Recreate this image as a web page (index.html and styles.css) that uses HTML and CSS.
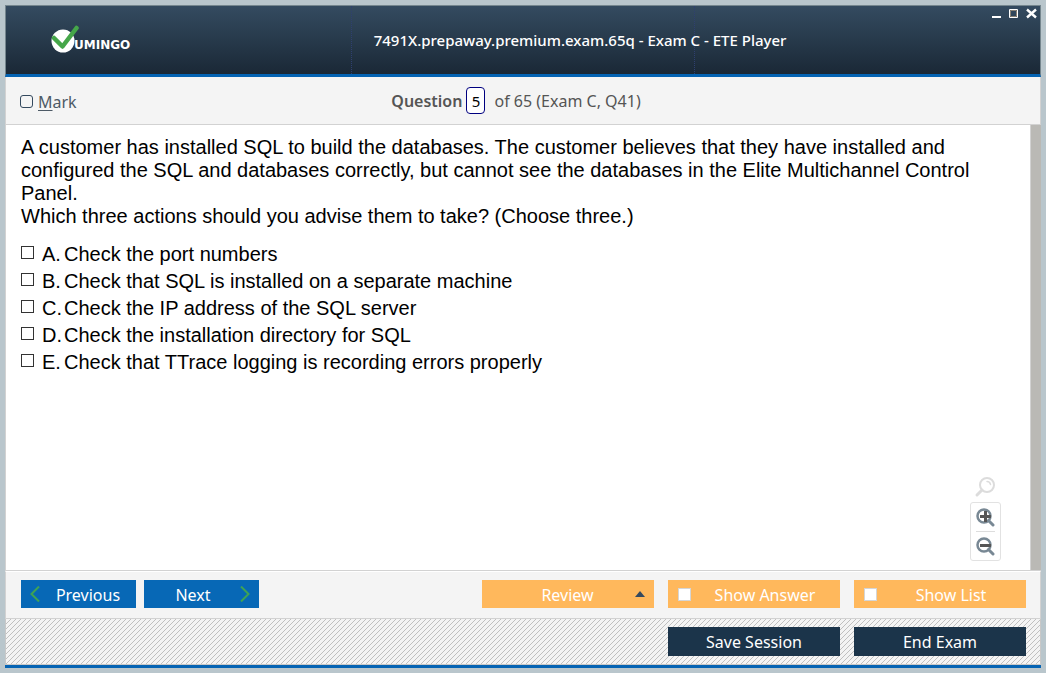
FILE: index.html
```
<!DOCTYPE html>
<html lang="en">
<head>
<meta charset="utf-8">
<title>7491X.prepaway.premium.exam.65q - Exam C - ETE Player</title>
<link rel="stylesheet" href="styles.css">
</head>
<body>
<div class="window">
  <header class="titlebar">
    <div class="brand">
      <svg class="brand-logo" width="84" height="30" viewBox="0 0 84 30" role="img" aria-label="Vumingo">
        <circle cx="13" cy="16" r="11.5" fill="#fff"/>
        <path d="M4 13L12.500 21.500L26.500 3" fill="none" stroke="#45a649" stroke-width="4.500" stroke-linecap="round" stroke-linejoin="round"/>
        <text class="brand-name" x="24" y="24">UMINGO</text>
      </svg>
    </div>
    <h1 class="title">7491X.prepaway.premium.exam.65q - Exam C - ETE Player</h1>
    <div class="window-controls">
      <button class="window-button" type="button" aria-label="Minimize"><svg width="12" height="12" viewBox="0 0 12 12"><path d="M2 8h9v2H2z" fill="#fff"/></svg></button>
      <button class="window-button" type="button" aria-label="Maximize"><svg width="12" height="12" viewBox="0 0 12 12"><path d="M1.500 1.500h8v8h-8z" fill="none" stroke="#fff"/><path d="M2.500 2.500h6v6h-6z" fill="none" stroke="#8a8275"/></svg></button>
      <button class="window-button" type="button" aria-label="Close"><svg width="12" height="12" viewBox="0 0 12 12"><path d="M1 1.500L10 9.500M10 1.500L1 9.500" stroke="#fff" stroke-width="2.400"/></svg></button>
    </div>
  </header>

  <div class="infobar">
    <label class="mark"><input class="mark-box" type="checkbox"><span><u>M</u>ark</span></label>
    <div class="counter">
      <label class="counter-label" for="number">Question</label>
      <input class="counter-input" id="number" type="text" value="5">
      <span>of 65 (Exam C, Q41)</span>
    </div>
  </div>

  <main class="content">
    <div class="question">
      <p class="question-text">A customer has installed SQL to build the databases. The customer believes that they have installed and configured the SQL and databases correctly, but cannot see the databases in the Elite Multichannel Control Panel.<br>Which three actions should you advise them to take? (Choose three.)</p>
      <div class="answers">
        <label class="answer"><input class="answer-box" type="checkbox"><span class="letter">A.</span><span>Check the port numbers</span></label>
        <label class="answer"><input class="answer-box" type="checkbox"><span class="letter">B.</span><span>Check that SQL is installed on a separate machine</span></label>
        <label class="answer"><input class="answer-box" type="checkbox"><span class="letter">C.</span><span>Check the IP address of the SQL server</span></label>
        <label class="answer"><input class="answer-box" type="checkbox"><span class="letter">D.</span><span>Check the installation directory for SQL</span></label>
        <label class="answer"><input class="answer-box" type="checkbox"><span class="letter">E.</span><span>Check that TTrace logging is recording errors properly</span></label>
      </div>
    </div>
    <div class="zoom">
      <svg class="zoom-reset" width="22" height="22" viewBox="0 0 22 22"><g fill="none" stroke="#dcdcdc" stroke-linecap="round"><circle cx="13" cy="9" r="7" stroke-width="2"/><path d="M8 14L3 19" stroke-width="3"/><path d="M13 5.500q3 0 3.500 3" stroke-width="1.500"/></g></svg>
      <div class="zoom-panel">
        <button class="zoom-button" type="button" aria-label="Zoom in"><svg width="20" height="20" viewBox="0 0 20 20"><g fill="none" stroke="#788894"><circle cx="8" cy="9" r="6.500" stroke-width="2.500"/><path d="M12.500 13.500L17 18" stroke-width="3" stroke-linecap="round"/></g><path d="M8 4h3v4h4v3h-4v4H8v-4H4V8h4z" fill="#555"/></svg></button>
        <button class="zoom-button" type="button" aria-label="Zoom out"><svg width="20" height="20" viewBox="0 0 20 20"><g fill="none" stroke="#788894"><circle cx="8" cy="9" r="6.500" stroke-width="2.500"/><path d="M12.500 13.500L17 18" stroke-width="3" stroke-linecap="round"/></g><path d="M4 8h11v3H4z" fill="#555"/></svg></button>
      </div>
    </div>
    <div class="scrollbar"></div>
  </main>

  <div class="navbar">
    <button class="button nav-button" type="button"><svg width="10" height="16" viewBox="0 0 10 16"><path d="M9 0.500L1.500 8L9 15.500" fill="none" stroke="#3fa354" stroke-width="2"/></svg><span class="nav-text">Previous</span></button>
    <button class="button nav-button" type="button"><span class="nav-text">Next</span><svg width="10" height="16" viewBox="0 0 10 16"><path d="M1 0.500L8.500 8L1 15.500" fill="none" stroke="#3fa354" stroke-width="2"/></svg></button>
    <div class="options">
      <button class="button option" type="button"><span class="option-text">Review</span><svg width="10" height="6" viewBox="0 0 10 6"><path d="M5 0l5 6H0z" fill="#34495e"/></svg></button>
      <label class="button option"><input class="option-box" type="checkbox"><span class="option-text">Show Answer</span></label>
      <label class="button option"><input class="option-box" type="checkbox"><span class="option-text">Show List</span></label>
    </div>
  </div>

  <footer class="footer">
    <button class="button session" type="button">Save Session</button>
    <button class="button session" type="button">End Exam</button>
  </footer>
</div>
</body>
</html>
```
FILE: styles.css
```
* { box-sizing: border-box; }

body {
  margin: 0;
  height: 100vh;
  padding: 5px;
  background: #b9c6cc;
  font-family: "Noto Sans", "Open Sans", sans-serif;
  font-size: 16px;
}

button, input { margin: 0; padding: 0; border: 0; font: inherit; }
svg { display: block; flex: none; }

.window {
  display: flex;
  flex-direction: column;
  height: 100%;
  border-bottom: 3px solid #0463b3;
}

.titlebar {
  display: grid;
  grid-template-columns: 1fr 1fr 1fr;
  height: 72px;
  border: 1px solid #75868e;
  border-bottom: 3px solid #0463b3;
  background: linear-gradient(#344b60, #1a2836);
}

.brand {
  display: flex;
  align-items: center;
  padding-left: 44px;
}

.brand-name {
  fill: #fff;
  font: bold 12px "DejaVu Sans", sans-serif;
}

.title {
  display: flex;
  align-items: center;
  min-width: 0;
  margin: 0;
  padding-left: 22px;
  border: 1px dotted #2f4070;
  border-width: 0 1px;
  color: #fff;
  font-size: 15px;
  font-weight: 500;
  line-height: 20px;
  white-space: nowrap;
}

.window-controls {
  display: flex;
  align-items: flex-start;
  justify-content: flex-end;
  gap: 6px;
  padding: 2px 2px 0 0;
}

.window-button { background: none; }

.infobar {
  display: grid;
  grid-template-columns: 1fr auto 1fr;
  align-items: center;
  height: 48px;
  padding: 0 14px;
  border: 1px solid #d2d2d2;
  border-top: 0;
  background: #f4f4f4;
  color: #555;
}

.mark { display: flex; align-items: center; gap: 5px; color: #4d5a66; padding-top: 3px; }
.mark u { text-underline-offset: 2px; }

.mark-box {
  appearance: none;
  width: 13px;
  height: 13px;
  margin-bottom: 2px;
  border: 1px solid #34495e;
  border-radius: 3px;
}

.counter { display: flex; align-items: center; margin-right: 14px; }
.counter-label { margin-right: 4px; font-weight: 600; }

.counter-input {
  width: 19px;
  height: 27px;
  margin-right: 9px;
  border: 1px solid #000080;
  border-radius: 4px;
  background: #fff;
  color: #000;
  font-size: 15px;
  text-align: center;
}

.content {
  flex: 1;
  display: flex;
  min-height: 0;
  border: 1px solid #d2d2d2;
  border-width: 0 0 1px 1px;
  background: #fff;
}

.question {
  flex: 1;
  padding: 11px 0 0 15px;
  color: #000;
  font: 20px/23px "Liberation Sans", Arial, sans-serif;
}

.question-text { margin: 0; }
.answers { margin-top: 13px; }
.answer { display: flex; align-items: center; height: 27px; }

.answer-box {
  appearance: none;
  width: 13px;
  height: 13px;
  margin: 0 8px 4px 0;
  border: 1px solid #333;
}

.letter { width: 22px; }

.zoom {
  align-self: flex-end;
  display: flex;
  flex-direction: column;
  gap: 4px;
  width: 31px;
  margin: 0 29px 9px 0;
}

.zoom-reset { margin-left: 4px; }

.zoom-panel {
  padding: 0 5px;
  border: 1px solid #e2e2e2;
  border-radius: 3px;
}

.zoom-button {
  display: flex;
  align-items: center;
  justify-content: center;
  width: 100%;
  height: 28px;
  background: none;
}

.zoom-button + .zoom-button { border-top: 1px solid #ddd; height: 29px; }

.scrollbar { width: 11px; border-left: 1px solid #d2d2d2; background: #bab9b5; }

.navbar {
  display: flex;
  align-items: center;
  gap: 8px;
  height: 48px;
  padding: 0 14px 2px 15px;
  border: 1px solid #d2d2d2;
  border-top-color: #fff;
  background: #f4f4f4;
}

.button {
  display: flex;
  align-items: center;
  height: 28px;
  color: #fff;
  font-size: 16px;
}

.nav-button { width: 115px; padding: 0 9px; background: #0768b6; }
.nav-text { flex: 1; padding-top: 2px; text-align: center; }
.nav-button svg + .nav-text { padding-left: 9px; }
.nav-button .nav-text:first-child { padding-right: 7px; }

.options { display: flex; gap: 14px; margin-left: auto; }
.option { width: 172px; padding: 0 9px 0 10px; background: #ffb85c; }
.option-text { flex: 1; padding: 2px 0 0 8px; text-align: center; }

.option-box {
  appearance: none;
  width: 13px;
  height: 13px;
  border: 1px solid #d5d5d5;
  background: #fff;
}

.footer {
  display: flex;
  align-items: center;
  justify-content: flex-end;
  gap: 14px;
  height: 46px;
  padding-right: 14px;
  border: 1px solid #c8c8c8;
  border-top: 0;
  background: #f4f4f4 linear-gradient(135deg, transparent 42%, #c0c0c0 42% 58%, transparent 58%) 0 0 / 5px 5px;
}

.session { justify-content: center; width: 172px; height: 29px; background: #1b344a; }
```
